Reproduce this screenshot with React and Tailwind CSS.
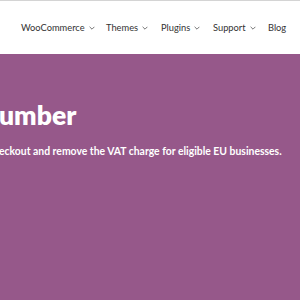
import React from "react";

const Chev = () => (
  <svg width="6" height="4" viewBox="0 0 6 4" className="ml-[4px] mt-[1px]" fill="none" stroke="#666" strokeWidth="0.9">
    <path d="M0.6 0.8 L3 3.2 L5.4 0.8" />
  </svg>
);

export default function App() {
  return (
    <div className="w-[300px] h-[300px] overflow-hidden bg-[#96588a]" style={{ fontFamily: "Lato, 'Open Sans', sans-serif" }}>
      <div className="h-[1px] bg-[#d4d4d4]" />
      <div className="h-[53px] bg-white flex items-center pl-[21px] text-[9.3px] text-[#333] whitespace-nowrap">
        <span className="flex items-center w-[85px]">WooCommerce<Chev /></span>
        <span className="flex items-center w-[55px]">Themes<Chev /></span>
        <span className="flex items-center w-[52px]">Plugins<Chev /></span>
        <span className="flex items-center w-[55px]">Support<Chev /></span>
        <span>Blog</span>
      </div>
      <div className="pt-[46px] text-white whitespace-nowrap">
        <div className="text-[26.5px] font-extrabold leading-[31px] -ml-[1px]">umber</div>
        <div className="text-[10.4px] font-bold mt-[13px] -ml-[1px]">eckout and remove the VAT charge for eligible EU businesses.</div>
      </div>
    </div>
  );
}
